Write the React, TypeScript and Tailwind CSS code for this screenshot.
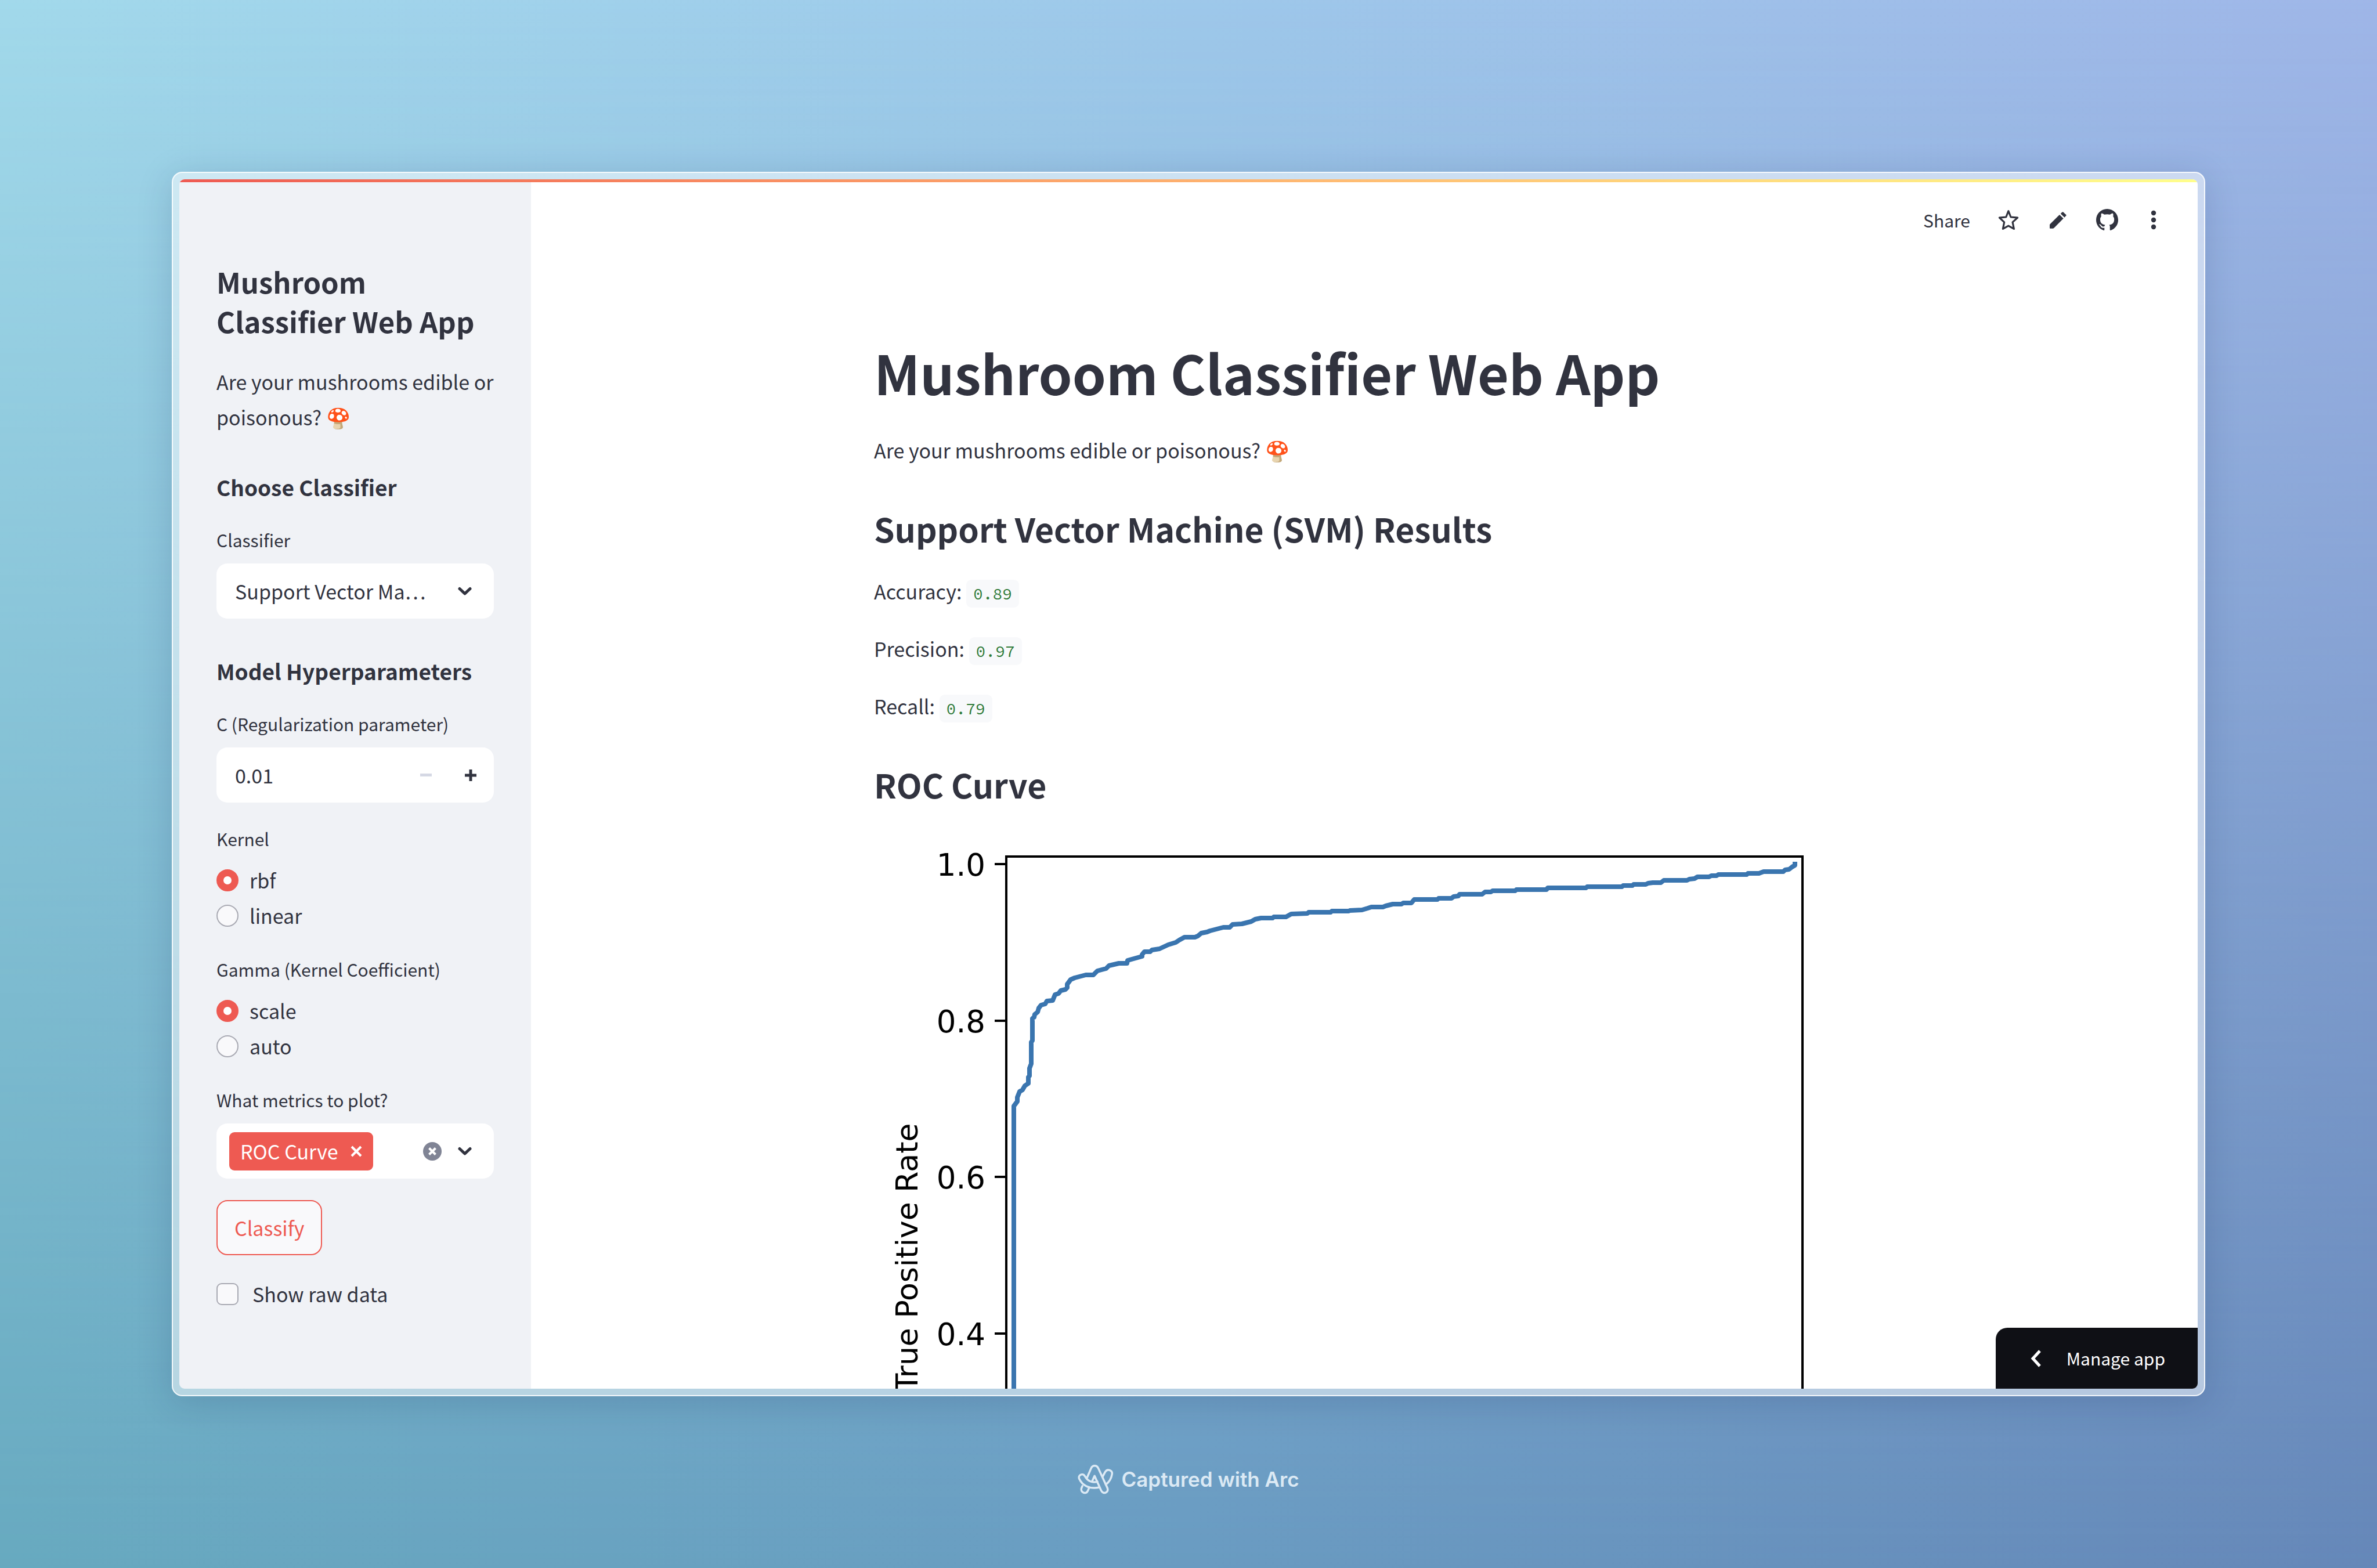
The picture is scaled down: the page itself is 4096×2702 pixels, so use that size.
import { useState, type ReactNode } from 'react';

const CURVE =
  '241,1400 241,455 247,447 247,440 251,430 256,427 260,420 266,416 266,405 268,403 268,390 271,382 271,345 273,342 273,304 276,302 277,297 282,293 284,286 288,281 295,279 298,274 308,273 312,263 318,261 322,256 330,254 333,251 333,245 339,237 346,234 365,229 378,229 385,222 400,218 405,213 422,209 436,209 437,204 462,197 462,194 466,189 476,189 479,186 492,184 507,177 520,173 526,169 535,164 553,164 558,162 564,157 574,155 579,153 602,147 613,147 618,142 634,141 650,137 657,133 667,131 687,131 689,129 710,129 719,124 747,123 749,121 787,121 789,119 818,119 820,118 841,117 851,114 857,112 877,112 882,110 894,107 909,107 912,105 926,105 931,99 971,99 973,97 995,97 999,94 1007,93 1009,90 1048,90 1053,86 1063,86 1066,84 1105,84 1107,82 1159,82 1161,79 1227,79 1229,77 1289,77 1291,75 1307,75 1309,73 1330,73 1334,71 1342,70 1356,70 1361,66 1401,66 1405,64 1414,63 1419,60 1439,60 1443,58 1452,58 1455,56 1504,56 1506,54 1525,54 1533,51 1567,51 1570,48 1577,47 1582,43 1587,40 1587,38';

const TICKS = [
  { label: '1.0', y: 38 },
  { label: '0.8', y: 308 },
  { label: '0.6', y: 577 },
  { label: '0.4', y: 847 },
];

function ChevronDown() {
  return (
    <svg viewBox="0 0 24 16" className="w-6 h-4" fill="none" stroke="#31333f" strokeWidth="5" strokeLinecap="round" strokeLinejoin="round" aria-hidden="true">
      <path d="M3 3.5 12 12l9-8.5" />
    </svg>
  );
}

function StarIcon() {
  return (
    <svg viewBox="48 234 136 138" className="size-9" fill="none" stroke="#31333f" strokeWidth="12" strokeLinejoin="round" aria-hidden="true">
      <path d="M115.500 244 100 284 56 288 88 318 79 362 115.500 342 152 362 143 318 176 288 131 284Z" />
    </svg>
  );
}

function PencilIcon() {
  return (
    <svg viewBox="380 248 108 108" className="size-[29px]" fill="#31333f" aria-hidden="true">
      <path d="M380 352V333Q380 329 383 326L443 267 468 291 408 351Q404 355 400 355H383Q380 355 380 352Z" />
      <path d="M450 260 459 251Q463 247 467 250L485 267Q488 270 485 273L475 284Z" />
    </svg>
  );
}

function GithubIcon() {
  return (
    <svg viewBox="0 0 16 16" className="size-[38px]" fill="#31333f" aria-hidden="true">
      <path d="M8 0C3.580 0 0 3.580 0 8c0 3.540 2.290 6.530 5.470 7.590.4.070.550-.170.550-.380 0-.190-.010-.820-.010-1.490-2.010.370-2.530-.490-2.690-.940-.090-.230-.480-.940-.820-1.130-.280-.150-.680-.520-.010-.530.630-.010 1.080.580 1.230.820.720 1.210 1.870.870 2.330.660.070-.520.280-.870.510-1.070-1.780-.2-3.640-.890-3.640-3.950 0-.870.310-1.590.820-2.150-.080-.2-.360-1.020.080-2.120 0 0 .670-.210 2.200.820.640-.180 1.320-.270 2-.270s1.360.090 2 .270c1.530-1.040 2.200-.820 2.200-.820.440 1.100.160 1.920.080 2.120.510.560.820 1.270.820 2.150 0 3.070-1.870 3.750-3.650 3.950.290.250.540.730.540 1.480 0 1.070-.010 1.930-.010 2.200 0 .210.150.460.550.380A8.010 8.010 0 0 0 16 8c0-4.420-3.580-8-8-8z" />
    </svg>
  );
}

function DotsIcon() {
  return (
    <svg viewBox="0 0 28 34" className="w-7 h-[34px]" fill="#31333f" aria-hidden="true">
      <circle cx="14" cy="5" r="4.200" />
      <circle cx="14" cy="17" r="4.200" />
      <circle cx="14" cy="29" r="4.200" />
    </svg>
  );
}

function ArcLogo() {
  return (
    <svg viewBox="54 50 230 192" className="w-[62px] h-[52px]" fill="none" stroke="#dbe9f4" strokeWidth="13" strokeLinecap="round" strokeLinejoin="round" aria-hidden="true">
      <path d="M112 141 140 76C149 54 176 54 186 76L244 202C256 232 216 246 204 218L162 125 147 158" />
      <path d="M180 161C148 172 118 158 101 128 88 102 54 120 64 143 82 182 124 212 193 198" />
      <path d="M213 131 230 99C244 76 276 88 274 112 270 140 256 164 234 180" />
      <path d="M84 190 78 204C70 232 108 244 118 222L126 204" />
    </svg>
  );
}

function Field({ label, htmlFor, children }: { label: string; htmlFor: string; children: ReactNode }) {
  return (
    <div className="flex flex-col gap-4">
      <label htmlFor={htmlFor} className="text-[30px] leading-[50px]">{label}</label>
      {children}
    </div>
  );
}

function RadioGroup({ legend, name, options }: { legend: string; name: string; options: string[] }) {
  const [value, setValue] = useState(options[0]);
  return (
    <fieldset>
      <legend className="mb-4 text-[30px] leading-[50px]">{legend}</legend>
      {options.map((option) => (
        <label key={option} className="flex items-center gap-[19px] h-[61px] text-[34px] leading-[61px]">
          <input
            type="radio"
            name={name}
            checked={value === option}
            onChange={() => setValue(option)}
            className="size-[38px] shrink-0 appearance-none rounded-full border-2 border-[#a9aab3] bg-[#f9f9fb] checked:border-[12px] checked:border-[#ee5a52] checked:bg-white"
          />
          {option}
        </label>
      ))}
    </fieldset>
  );
}

function SectionTitle({ children }: { children: ReactNode }) {
  return <h3 className="pt-[30px] pb-[6px] text-[37px] leading-[46px] font-bold">{children}</h3>;
}

function Sidebar() {
  return (
    <aside className="flex w-[606px] shrink-0 flex-col gap-[37px] bg-[#f0f2f6] px-16 pt-[142px]">
      <h2 className="pb-[3px] text-[49px] leading-[68px] font-bold">Mushroom Classifier Web App</h2>
      <p className="text-[34px] leading-[61px]">Are your mushrooms edible or poisonous? 🍄</p>

      <SectionTitle>Choose Classifier</SectionTitle>
      <Field label="Classifier" htmlFor="classifier">
        <div className="relative flex items-center">
          <select id="classifier" className="h-[95px] w-full appearance-none truncate rounded-[19px] bg-white pl-8 pr-[110px] text-[34px] [font-variant-east-asian:proportional-width]">
            <option>Support Vector Machine (SVM)</option>
            <option>Logistic Regression</option>
            <option>Random Forest</option>
          </select>
          <span className="pointer-events-none absolute right-[38px]"><ChevronDown /></span>
        </div>
      </Field>

      <SectionTitle>Model Hyperparameters</SectionTitle>
      <Field label="C (Regularization parameter)" htmlFor="regularization">
        <div className="flex h-[95px] items-center overflow-hidden rounded-[19px] bg-white">
          <input id="regularization" type="text" inputMode="decimal" defaultValue="0.01" className="h-full min-w-0 flex-1 bg-transparent pl-8 text-[34px]" />
          <button type="button" disabled aria-label="Decrease" className="flex h-full w-[74px] items-center justify-center">
            <span className="h-[5px] w-5 bg-[#d5d8e4]" />
          </button>
          <button type="button" aria-label="Increase" className="flex h-full w-20 items-center justify-center">
            <svg viewBox="0 0 20 20" className="size-5" fill="#31333f" aria-hidden="true">
              <path d="M7.500 0h5v7.500H20v5h-7.500V20h-5v-7.500H0v-5h7.500z" />
            </svg>
          </button>
        </div>
      </Field>

      <RadioGroup legend="Kernel" name="kernel" options={['rbf', 'linear']} />
      <RadioGroup legend="Gamma (Kernel Coefficient)" name="gamma" options={['scale', 'auto']} />

      <Field label="What metrics to plot?" htmlFor="metrics">
        <div className="flex h-[95px] items-center rounded-[19px] bg-white pr-[38px] pl-[22px]">
          <span className="flex h-[66px] items-center gap-[21px] rounded-[9px] bg-[#ee5a52] px-[19px] text-[34px] leading-[66px] whitespace-nowrap text-white">
            ROC Curve
            <button type="button" aria-label="Remove ROC Curve">
              <svg viewBox="0 0 20 20" className="size-5" fill="none" stroke="white" strokeWidth="4" aria-hidden="true">
                <path d="M2 2l16 16M18 2 2 18" />
              </svg>
            </button>
          </span>
          <input id="metrics" type="text" className="h-full w-0 min-w-0 flex-1 bg-transparent" />
          <button type="button" aria-label="Clear all" className="mr-7">
            <svg viewBox="0 0 32 32" className="size-8" aria-hidden="true">
              <circle cx="16" cy="16" r="16" fill="#808495" />
              <path d="M10.500 10.500l11 11M21.500 10.500l-11 11" stroke="white" strokeWidth="4" />
            </svg>
          </button>
          <button type="button" aria-label="Open metrics"><ChevronDown /></button>
        </div>
      </Field>

      <button type="button" className="h-[95px] self-start rounded-[19px] border-2 border-[#ee5a52] bg-[#f9f9fb] px-[29px] text-[34px] text-[#ee5a52]">
        Classify
      </button>

      <label className="flex h-[60px] items-center gap-6 text-[34px] leading-[60px]">
        <input type="checkbox" className="size-[38px] appearance-none rounded-[9px] border-2 border-[#a9aab3] bg-[#f9f9fb] checked:bg-[#ee5a52]" />
        Show raw data
      </label>
    </aside>
  );
}

function Toolbar() {
  return (
    <header className="flex h-[140px] shrink-0 items-center justify-end gap-[47px] pr-[62px]">
      <button type="button" className="text-[30px] leading-[50px]">Share</button>
      <button type="button" aria-label="Star" className="flex w-[38px] justify-center"><StarIcon /></button>
      <button type="button" aria-label="Edit" className="flex w-[38px] justify-center"><PencilIcon /></button>
      <a href="#source" aria-label="View source on GitHub"><GithubIcon /></a>
      <button type="button" aria-label="More options"><DotsIcon /></button>
    </header>
  );
}

function Metric({ name, value }: { name: string; value: string }) {
  return (
    <p className="text-[34px] leading-[61px]">
      {name}:{' '}
      <code className="rounded-[9px] bg-[#f8f9fb] px-3 py-[6px] font-['Source_Code_Pro','Liberation_Mono',monospace] text-[28px] leading-none text-[#2f7a38]">{value}</code>
    </p>
  );
}

function RocChart() {
  return (
    <svg viewBox="0 0 1690 1500" className="mt-[22px] w-full shrink-0" role="img" aria-label="ROC curve">
      <g fill="none" stroke="black" strokeWidth="4">
        <rect x="228" y="25" width="1372" height="1374" />
        {TICKS.map(({ label, y }) => (
          <path key={label} d={`M208 ${y}H228`} />
        ))}
      </g>
      <g fontFamily="DejaVu Sans, sans-serif" fontSize="53" fill="black">
        {TICKS.map(({ label, y }) => (
          <text key={label} x="192" y={y + 20} textAnchor="end">{label}</text>
        ))}
        <text transform="translate(75 716) rotate(-90)" fontSize="52" textAnchor="middle">True Positive Rate</text>
      </g>
      <polyline points={CURVE} fill="none" stroke="#3a75af" strokeWidth="8" strokeLinejoin="round" strokeLinecap="square" />
    </svg>
  );
}

function Results() {
  return (
    <main className="flex min-w-0 flex-1 flex-col bg-white">
      <Toolbar />
      <div className="mx-auto flex w-full max-w-[1690px] flex-col gap-[38px] pt-[129px]">
        <h1 className="pb-1 text-[93px] leading-[125px] font-bold">Mushroom Classifier Web App</h1>
        <p className="text-[34px] leading-[61px]">Are your mushrooms edible or poisonous? 🍄</p>
        <h2 className="pt-[26px] text-[57px] leading-[80px] font-bold">Support Vector Machine (SVM) Results</h2>
        <Metric name="Accuracy" value="0.89" />
        <Metric name="Precision" value="0.97" />
        <Metric name="Recall" value="0.79" />
        <h2 className="pt-[26px] text-[57px] leading-[80px] font-bold">ROC Curve</h2>
        <RocChart />
      </div>
    </main>
  );
}

export default function App() {
  return (
    <div className="relative isolate grid h-screen grid-rows-[296px_minmax(0,1fr)_296px] bg-linear-to-r from-[#a2d9eb] via-[#9ec8ea] to-[#9fb6e8] px-[296px] font-['Noto_Sans_CJK_KR','Noto_Sans',sans-serif] text-[#31333f]">
      <div className="absolute inset-0 -z-10 bg-linear-to-r from-[#67a9bf] via-[#699bc1] to-[#6587b8] [mask-image:linear-gradient(to_top,black,transparent)]" />

      <div className="row-start-2 flex rounded-[18px] border-2 border-white/80 bg-white/50 p-[11px] shadow-[0_10px_60px_rgba(20,40,90,0.18)]">
        <div className="relative flex min-w-0 flex-1 overflow-hidden rounded-[9px]">
          <Sidebar />
          <Results />
          <div className="absolute inset-x-0 top-0 h-[5px] bg-linear-to-r from-[#ee5a52] to-[#fffe8c]" />
          <button type="button" className="absolute right-0 bottom-0 flex h-[105px] items-center gap-[44px] rounded-tl-[20px] bg-[#0f1015] pr-[56px] pl-[60px] text-[30px] text-white">
            <svg viewBox="0 0 18 30" className="h-[30px] w-[18px]" fill="none" stroke="white" strokeWidth="5" aria-hidden="true">
              <path d="M16 2 4 15l12 13" />
            </svg>
            Manage app
          </button>
        </div>
      </div>

      <footer className="row-start-3 flex items-center justify-center gap-[13px] pb-[10px] font-[Inter,sans-serif] text-[35px] font-semibold text-[#dbe9f4]">
        <ArcLogo />
        Captured with Arc
      </footer>
    </div>
  );
}
